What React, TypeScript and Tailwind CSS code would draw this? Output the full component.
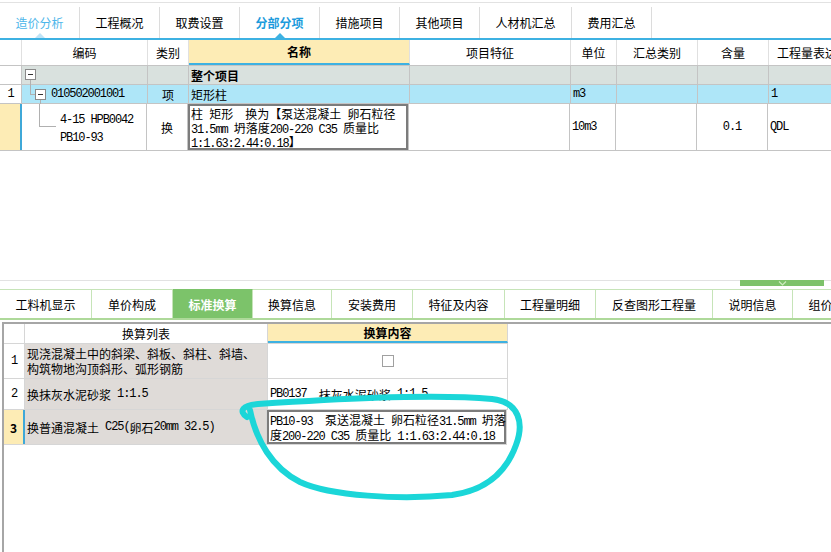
import React from "react";

function Txt({ s }: { s: string }) {
  const parts = s.split(/([ -~]+)/);
  return (
    <>
      {parts.map((p, i) =>
        /[ -~]/.test(p) ? (
          <span
            key={i}
            className="whitespace-pre font-['Liberation_Mono',monospace] text-[12px] leading-[12px] tracking-[-1.1px]"
          >
            {p}
          </span>
        ) : (
          <React.Fragment key={i}>{p}</React.Fragment>
        )
      )}
    </>
  );
}

const topTabs = [
  { label: "造价分析", w: "w-[80px]", cls: "text-[#4db6ea]", mark: "border-b-[#bfe3f6]" },
  { label: "工程概况", w: "w-[80px]", cls: "", mark: "" },
  { label: "取费设置", w: "w-[80px]", cls: "", mark: "" },
  { label: "分部分项", w: "w-[80px]", cls: "font-bold text-[#1c9bdc]", mark: "border-b-[#3db1e2]" },
  { label: "措施项目", w: "w-[80px]", cls: "", mark: "" },
  { label: "其他项目", w: "w-[80px]", cls: "", mark: "" },
  { label: "人材机汇总", w: "w-[92px]", cls: "", mark: "" },
  { label: "费用汇总", w: "w-[80px]", cls: "", mark: "" },
];

const bottomTabs = [
  { label: "工料机显示", w: "w-[92px]" },
  { label: "单价构成", w: "w-[81px]" },
  { label: "标准换算", w: "w-[80px]", active: true },
  { label: "换算信息", w: "w-[79px]" },
  { label: "安装费用", w: "w-[81px]" },
  { label: "特征及内容", w: "w-[92px]" },
  { label: "工程量明细", w: "w-[91px]" },
  { label: "反查图形工程量", w: "w-[117px]" },
  { label: "说明信息", w: "w-[80px]" },
  { label: "组价方案", w: "w-[80px]" },
];

const hc = "flex h-full shrink-0 items-center justify-center border-r border-[#e0e0e0]";
const bc = "flex h-full shrink-0 items-center border-r border-[#c4c4c4]";

function MinusBox({ className }: { className: string }) {
  return (
    <div className={`absolute flex h-[11px] w-[11px] items-center justify-center border border-[#8a8a8a] bg-white ${className}`}>
      <div className="h-px w-[5px] bg-[#333]" />
    </div>
  );
}

function TopTabs() {
  return (
    <div className="flex h-[37px] items-end border-b-2 border-[#3db1e2]">
      {topTabs.map((t) => (
        <div
          key={t.label}
          className={`relative flex h-[31px] shrink-0 items-center justify-center border-r border-[#dcdcdc] ${t.w} ${t.cls}`}
        >
          {t.label}
          {t.mark && (
            <span
              className={`absolute bottom-0 left-1/2 -ml-[5px] border-x-[5px] border-b-[5px] border-x-transparent ${t.mark}`}
            />
          )}
        </div>
      ))}
    </div>
  );
}

function TopGrid() {
  return (
    <div>
      <div className="flex h-[26px] border-b border-[#c4c4c4]">
        <div className={`${hc} w-[22px]`} />
        <div className={`${hc} w-[126px]`}>编码</div>
        <div className={`${hc} w-[41px]`}>类别</div>
        <div className={`${hc} w-[221px] border-b-2 border-b-[#3db1e2] bg-[#fdecb5] font-bold`}>名称</div>
        <div className={`${hc} w-[161px]`}>项目特征</div>
        <div className={`${hc} w-[46px]`}>单位</div>
        <div className={`${hc} w-[81px]`}>汇总类别</div>
        <div className={`${hc} w-[71px]`}>含量</div>
        <div className={`${hc} w-[88px] justify-start pl-[8px]`}>工程量表达式</div>
      </div>

      <div className="flex h-[19px] border-b border-[#c4c4c4]">
        <div className={`${bc} w-[22px] bg-white`} />
        <div className={`${bc} relative w-[126px] bg-[#d9e1de]`}>
          <MinusBox className="left-[3px] top-[3px]" />
          <div className="absolute left-[8px] top-[14px] h-[6px] w-px bg-[#b0b0b0]" />
        </div>
        <div className={`${bc} w-[41px] bg-[#d9e1de]`} />
        <div className={`${bc} w-[221px] bg-[#d9e1de] pl-[2px] font-bold`}>整个项目</div>
        <div className={`${bc} w-[161px] bg-[#d9e1de]`} />
        <div className={`${bc} w-[46px] bg-[#d9e1de]`} />
        <div className={`${bc} w-[81px] bg-[#d9e1de]`} />
        <div className={`${bc} w-[71px] bg-[#d9e1de]`} />
        <div className={`${bc} w-[88px] bg-[#d9e1de]`} />
      </div>

      <div className="flex h-[19px] border-b border-[#c4c4c4]">
        <div className={`${bc} w-[22px] justify-center bg-white`}>
          <Txt s="1" />
        </div>
        <div className={`${bc} relative w-[126px] bg-[#aee6f8] pl-[29px]`}>
          <div className="absolute left-[8px] top-0 h-[9px] w-px bg-[#b0b0b0]" />
          <div className="absolute left-[8px] top-[9px] h-px w-[5px] bg-[#b0b0b0]" />
          <MinusBox className="left-[13px] top-[4px]" />
          <div className="absolute left-[18px] top-[15px] h-[4px] w-px bg-[#b0b0b0]" />
          <Txt s="010502001001" />
        </div>
        <div className={`${bc} w-[41px] justify-center bg-[#aee6f8]`}>项</div>
        <div className={`${bc} w-[221px] bg-[#aee6f8] pl-[2px]`}>矩形柱</div>
        <div className={`${bc} w-[161px] bg-[#aee6f8]`} />
        <div className={`${bc} w-[46px] bg-[#aee6f8] pl-[2px]`}>
          <Txt s="m3" />
        </div>
        <div className={`${bc} w-[81px] bg-[#aee6f8]`} />
        <div className={`${bc} w-[71px] bg-[#aee6f8]`} />
        <div className={`${bc} w-[88px] bg-[#aee6f8] pl-[2px]`}>
          <Txt s="1" />
        </div>
      </div>

      <div className="flex h-[47px] border-b border-[#c4c4c4]">
        <div className={`${bc} w-[22px] border-r-2 border-r-[#3fa8d8] bg-[#fdecb5]`} />
        <div className={`${bc} relative w-[125px] pl-[38px]`}>
          <div className="absolute left-[17px] top-0 h-[22px] w-px bg-[#b0b0b0]" />
          <div className="absolute left-[17px] top-[22px] h-px w-[17px] bg-[#b0b0b0]" />
          <div className="flex flex-col gap-[2px]">
            <div>
              <Txt s="4-15 HPB0042" />
            </div>
            <div>
              <Txt s="PB10-93" />
            </div>
          </div>
        </div>
        <div className={`${bc} w-[41px] justify-center`}>换</div>
        <div className={`${bc} w-[221px]`}>
          <div className="flex h-full w-full flex-col overflow-hidden border-2 border-[#7c7c7c] px-[1px] pt-[1px]">
            <div className="h-[14px] whitespace-nowrap leading-[14px]">
              <Txt s="柱 矩形  换为【泵送混凝土 卵石粒径" />
            </div>
            <div className="h-[14px] whitespace-nowrap leading-[14px]">
              <Txt s="31.5mm 坍落度200-220 C35 质量比" />
            </div>
            <div className="h-[14px] whitespace-nowrap leading-[14px]">
              <Txt s="1:1.63:2.44:0.18】" />
            </div>
          </div>
        </div>
        <div className={`${bc} w-[161px]`} />
        <div className={`${bc} w-[46px] pl-[2px]`}>
          <Txt s="10m3" />
        </div>
        <div className={`${bc} w-[81px]`} />
        <div className={`${bc} w-[71px] justify-center`}>
          <Txt s="0.1" />
        </div>
        <div className={`${bc} w-[88px] pl-[2px]`}>
          <Txt s="QDL" />
        </div>
      </div>
    </div>
  );
}

function Splitter() {
  return (
    <div className="flex h-[9px] justify-end border-t border-[#e2e2e2] pr-[7px]">
      <div className="-mt-px flex h-[6px] w-[84px] items-center justify-center bg-[#7dc26a]">
        <svg width="9" height="5" viewBox="0 0 9 5">
          <path d="M1 0.5 L4.5 4 L8 0.5" fill="none" stroke="#cdebbf" strokeWidth="1.2" />
        </svg>
      </div>
    </div>
  );
}

function BottomTabs() {
  return (
    <div className="flex h-[31px] border-b-2 border-[#aed99a]">
      {bottomTabs.map((t) => (
        <div
          key={t.label}
          className={`flex h-full shrink-0 items-center justify-center border-r border-t ${t.w} ${
            t.active
              ? "border-t-[#7cc36a] border-r-[#c6e4b8] bg-[#7cc36a] font-bold text-white"
              : "border-[#c6e4b8]"
          }`}
        >
          {t.label}
        </div>
      ))}
    </div>
  );
}

const gc = "flex h-full shrink-0 items-center border-r border-[#d6d6d6]";

function BottomGrid() {
  return (
    <div className="ml-[2px] mt-[2px] h-[240px] border-l-2 border-t-2 border-[#a6a6a6]">
      <div className="flex h-[20px] w-fit border-b border-[#d6d6d6]">
        <div className={`${gc} w-[21px]`} />
        <div className={`${gc} w-[243px] justify-center`}>换算列表</div>
        <div className={`${gc} w-[240px] justify-center border-b-2 border-b-[#3db1e2] bg-[#fdecb5] font-bold`}>
          换算内容
        </div>
      </div>

      <div className="flex h-[35px] w-fit border-b border-[#d6d6d6]">
        <div className={`${gc} w-[21px] justify-center`}>
          <Txt s="1" />
        </div>
        <div className={`${gc} w-[243px] bg-[#dfdbd8] pl-[2px]`}>
          <div className="flex flex-col">
            <div className="h-[15px] whitespace-nowrap">现浇混凝土中的斜梁、斜板、斜柱、斜墙、</div>
            <div className="h-[15px] whitespace-nowrap">构筑物地沟顶斜形、弧形钢筋</div>
          </div>
        </div>
        <div className={`${gc} w-[240px] justify-center`}>
          <div className="h-[12px] w-[12px] border border-[#a0a0a0] bg-white" />
        </div>
      </div>

      <div className="flex h-[31px] w-fit border-b border-[#d6d6d6]">
        <div className={`${gc} w-[21px] justify-center`}>
          <Txt s="2" />
        </div>
        <div className={`${gc} w-[243px] bg-[#dfdbd8] pl-[2px]`}>
          <Txt s="换抹灰水泥砂浆 1:1.5" />
        </div>
        <div className={`${gc} w-[240px] whitespace-nowrap pl-[2px]`}>
          <Txt s="PB0137  抹灰水泥砂浆 1:1.5" />
        </div>
      </div>

      <div className="flex h-[35px] w-fit border-b border-[#d6d6d6]">
        <div className={`${gc} w-[21px] justify-center border-r-2 border-r-[#3fa8d8] bg-[#fdecb5] font-bold`}>3</div>
        <div className={`${gc} w-[242px] bg-[#dfdbd8] pl-[2px]`}>
          <Txt s="换普通混凝土 C25(卵石20mm 32.5)" />
        </div>
        <div className={`${gc} w-[240px]`}>
          <div className="flex h-full w-full flex-col justify-center border-2 border-[#7c7c7c] px-[1px]">
            <div className="h-[15px] whitespace-nowrap">
              <Txt s="PB10-93  泵送混凝土 卵石粒径31.5mm 坍落" />
            </div>
            <div className="h-[15px] whitespace-nowrap">
              <Txt s="度200-220 C35 质量比 1:1.63:2.44:0.18" />
            </div>
          </div>
        </div>
      </div>
    </div>
  );
}

export default function App() {
  return (
    <div className="relative h-[552px] w-[831px] overflow-hidden bg-white font-['Noto_Sans_CJK_SC',sans-serif] text-[12px] leading-[15px] text-black">
      <div className="h-[3px] border-b border-[#e2e2e2]" />
      <TopTabs />
      <TopGrid />
      <div className="h-[129px]" />
      <Splitter />
      <BottomTabs />
      <BottomGrid />
      <svg className="pointer-events-none absolute left-0 top-0" width="831" height="552">
        <path
          d="M247 417 C238 411, 243 405, 258 404 C320 400, 430 393, 492 399 C520 402, 524 424, 516 445 C507 470, 488 490, 452 495 C400 500, 330 496, 300 482 C272 468, 256 440, 250 410"
          fill="none"
          stroke="#1bd6d8"
          strokeWidth="6"
          strokeLinecap="round"
          strokeLinejoin="round"
        />
      </svg>
    </div>
  );
}
